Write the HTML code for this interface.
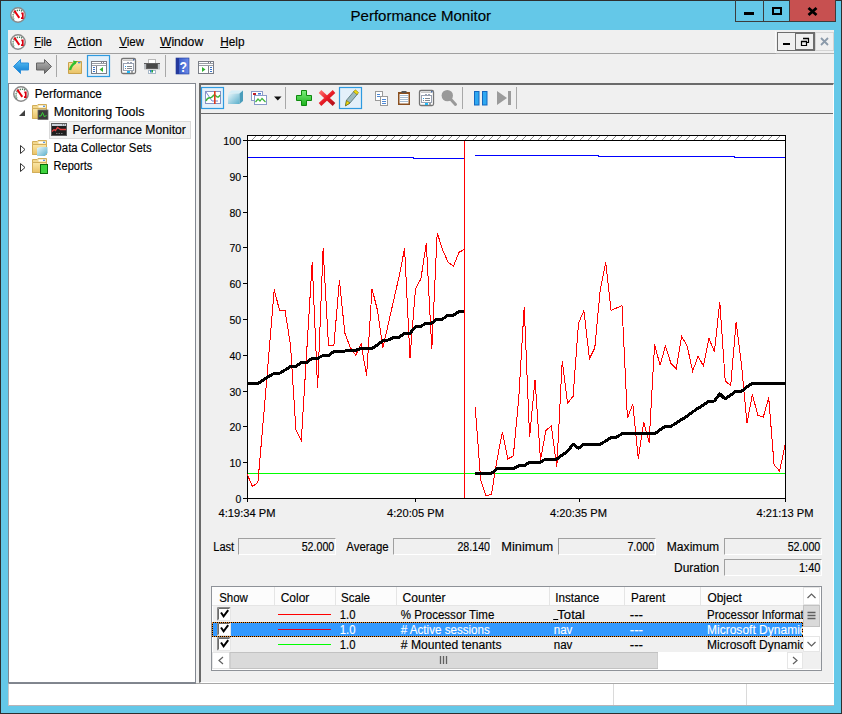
<!DOCTYPE html>
<html><head><meta charset="utf-8">
<style>
*{margin:0;padding:0;box-sizing:border-box}
html,body{width:842px;height:714px;overflow:hidden}
body{position:relative;background:#64C8E8;font-family:"Liberation Sans",sans-serif;font-size:12px;color:#000}
.a{position:absolute}
.t{position:absolute;white-space:pre;line-height:1}
</style></head><body>

<!-- outer dark border -->
<div class="a" style="left:0;top:0;width:842px;height:714px;border:1px solid #2E2E2E"></div>
<svg width="0" height="0" style="position:absolute">
<defs>
<symbol id="perf" viewBox="0 0 16 16">
<circle cx="8" cy="8" r="7.2" fill="#fff" stroke="#8A8A8A" stroke-width="1.5"/>
<path d="M4,12.5A6,6 0 0 1 12.5,4.3" fill="none" stroke="#4A7A5A" stroke-width="1.5" stroke-dasharray="1.2,0.9"/>
<path d="M4.3,3.6L9.3,10.9" stroke="#E8000C" stroke-width="1.9" fill="none"/>
<path d="M11.3,6.3H12.8V11.2H11" stroke="#D80010" stroke-width="1.7" fill="none"/>
</symbol>
</defs></svg>
<svg class="a" style="left:10px;top:7px" width="16" height="16"><use href="#perf"/></svg>

<!-- title -->

<!-- caption buttons -->
<div class="a" style="left:789px;top:0;width:47px;height:22px;background:#C75050"></div>
<div class="a" style="left:735px;top:0;width:101px;height:22px;border:1px solid #3C3C3C;border-top:none"></div>
<div class="a" style="left:763px;top:0;width:1px;height:21px;background:#3C3C3C"></div>
<div class="a" style="left:789px;top:0;width:1px;height:21px;background:#3C3C3C"></div>
<div class="a" style="left:744px;top:12px;width:10px;height:3px;background:#000"></div>
<div class="a" style="left:772px;top:7px;width:10px;height:8px;border:2px solid #000;border-top-width:2px"></div>
<svg class="a" style="left:806px;top:6px" width="13" height="11"><path d="M2.5,2L10.5,9M10.5,2L2.5,9" stroke="#000" stroke-width="2.8"/></svg>

<!-- menu bar -->
<div class="a" style="left:8px;top:30px;width:826px;height:24px;background:#F0F0F0;border-bottom:1px solid #A0A0A0"></div>
<svg class="a" style="left:10px;top:34px" width="16" height="16"><use href="#perf"/></svg>
<!-- MDI buttons -->
<div class="a" style="left:775px;top:31px;width:1px;height:22px;background:#FAFAFA"></div>
<div class="a" style="left:776px;top:31px;width:58px;height:23px;background:#F0F0F0;border-bottom:1px solid #B4B4B4"></div>
<div class="a" style="left:777px;top:32px;width:19px;height:19px;border:1px solid #6E6E6E;background:#F0F0F0"></div>
<div class="a" style="left:795px;top:32px;width:20px;height:19px;border:2px solid #6E6E6E;border-left-width:1px;background:#F0F0F0"></div>
<div class="a" style="left:815px;top:32px;width:19px;height:19px;border:1px solid #D4D4D4;background:#F0F0F0"></div>
<div class="a" style="left:783px;top:43px;width:7px;height:2px;background:#000"></div>
<svg class="a" style="left:799px;top:36px" width="12" height="12"><path d="M4.5,2.5h5v4h-2M2.5,5.5h5v4h-5z" fill="none" stroke="#000" stroke-width="1.2"/><path d="M4,2.5h6M2,5.5h6" stroke="#000" stroke-width="1.5"/></svg>
<svg class="a" style="left:819px;top:36px" width="12" height="12"><path d="M2,2L9,9M9,2L2,9" stroke="#8B9AAA" stroke-width="1.8"/></svg>

<!-- toolbar + client bg -->
<div class="a" style="left:8px;top:54px;width:826px;height:630px;background:#F0F0F0"></div>

<!-- tree panel -->
<div class="a" style="left:8px;top:83px;width:188px;height:600px;background:#fff;border:1px solid #828790"></div>

<!-- right panel -->
<div class="a" style="left:199px;top:83px;width:635px;height:600px;background:#F0F0F0;border-left:2px solid #6A6A6A;border-top:2px solid #6A6A6A;border-right:1px solid #FFFFFF;border-bottom:1px solid #FFFFFF"></div>
<div class="a" style="left:201px;top:113px;width:632px;height:1px;background:#6A6A6A"></div>

<!-- status bar -->
<div class="a" style="left:8px;top:683px;width:826px;height:23px;background:#fff;border-top:1px solid #80848C;border-bottom:1px solid #B9B4B8;border-left:1px solid #C8C8C8"></div>
<div class="a" style="left:196px;top:683px;width:638px;height:1px;background:#A8A8A8"></div>
<div class="a" style="left:613px;top:684px;width:1px;height:21px;background:#DADADA"></div>
<div class="a" style="left:746px;top:684px;width:1px;height:21px;background:#DADADA"></div>

<svg class="a" style="left:0;top:0" width="842" height="714" viewBox="0 0 842 714" shape-rendering="crispEdges">
<rect x="247.5" y="135.5" width="538" height="363" fill="#fff" stroke="#000" stroke-width="1"/>
<line x1="247" y1="140.5" x2="786" y2="140.5" stroke="#000"/>
<path d="M252,140L256,136M260,140L264,136M268,140L272,136M276,140L280,136M284,140L288,136M292,140L296,136M301,140L305,136M309,140L313,136M317,140L321,136M325,140L329,136M333,140L337,136M342,140L346,136M350,140L354,136M358,140L362,136M366,140L370,136M374,140L378,136M383,140L387,136M391,140L395,136M399,140L403,136M407,140L411,136M415,140L419,136M424,140L428,136M432,140L436,136M440,140L444,136M448,140L452,136M456,140L460,136M465,140L469,136M473,140L477,136M481,140L485,136M489,140L493,136M497,140L501,136M506,140L510,136M514,140L518,136M522,140L526,136M530,140L534,136M538,140L542,136M547,140L551,136M555,140L559,136M563,140L567,136M571,140L575,136M580,140L584,136M588,140L592,136M596,140L600,136M604,140L608,136M612,140L616,136M621,140L625,136M629,140L633,136M637,140L641,136M645,140L649,136M653,140L657,136M662,140L666,136M670,140L674,136M678,140L682,136M686,140L690,136M694,140L698,136M703,140L707,136M711,140L715,136M719,140L723,136M727,140L731,136M735,140L739,136M744,140L748,136M752,140L756,136M760,140L764,136M768,140L772,136M776,140L780,136" stroke="#707070" stroke-width="0.8" fill="none" shape-rendering="auto"/>
<line x1="243" y1="140.5" x2="247" y2="140.5" stroke="#000"/>
<line x1="243" y1="176.5" x2="247" y2="176.5" stroke="#000"/>
<line x1="243" y1="212.5" x2="247" y2="212.5" stroke="#000"/>
<line x1="243" y1="247.5" x2="247" y2="247.5" stroke="#000"/>
<line x1="243" y1="283.5" x2="247" y2="283.5" stroke="#000"/>
<line x1="243" y1="319.5" x2="247" y2="319.5" stroke="#000"/>
<line x1="243" y1="355.5" x2="247" y2="355.5" stroke="#000"/>
<line x1="243" y1="391.5" x2="247" y2="391.5" stroke="#000"/>
<line x1="243" y1="426.5" x2="247" y2="426.5" stroke="#000"/>
<line x1="243" y1="462.5" x2="247" y2="462.5" stroke="#000"/>
<line x1="243" y1="498.5" x2="247" y2="498.5" stroke="#000"/>
<line x1="247.5" y1="498" x2="247.5" y2="502" stroke="#000"/>
<line x1="415.5" y1="498" x2="415.5" y2="502" stroke="#000"/>
<line x1="579.5" y1="498" x2="579.5" y2="502" stroke="#000"/>
<line x1="785.5" y1="498" x2="785.5" y2="502" stroke="#000"/>
</svg>
<svg class="a" style="left:0;top:0" width="842" height="714" viewBox="0 0 842 714">
<line x1="248" y1="473.5" x2="785" y2="473.5" stroke="#00FF00" stroke-width="1" shape-rendering="crispEdges"/>
<path d="M248,157.5H413V158.5H464.4 M475.2,155.5H598V156.5H734V157.5H785" stroke="#0000FF" fill="none" stroke-width="1" shape-rendering="crispEdges"/>
<polyline points="247.0,473.7 252.4,486.5 257.9,482.5 263.3,420.0 268.7,356.0 274.2,289.6 279.6,310.6 285.0,310.2 290.5,345.0 295.9,430.0 301.3,440.4 306.8,350.0 312.2,262.0 317.6,388.4 323.1,248.4 328.5,345.5 333.9,345.5 339.4,280.4 344.8,333.0 350.3,347.5 355.7,355.3 361.1,343.5 366.6,375.7 372.0,288.6 377.4,310.0 382.9,347.5 388.3,324.0 393.7,300.0 399.2,276.0 404.6,248.4 410.0,358.2 415.5,288.6 420.9,278.8 426.3,243.5 431.8,349.4 437.2,232.7 442.6,250.0 448.1,262.2 453.5,266.1 458.9,252.4 464.4,249.4" fill="none" stroke="#FF0000" stroke-width="1" shape-rendering="crispEdges"/>
<polyline points="475.2,407.0 480.7,480.0 486.1,496.0 491.5,494.0 497.0,460.0 502.4,431.6 507.8,459.0 513.3,456.0 518.7,399.0 524.2,306.7 529.6,437.0 535.0,379.6 540.5,460.0 545.9,430.6 551.3,425.7 556.8,466.9 562.2,361.0 567.6,403.1 573.1,396.3 578.5,323.3 583.9,310.6 589.4,358.6 594.8,347.8 600.2,290.0 605.7,262.2 611.1,310.4 616.5,308.0 622.0,305.5 627.4,418.0 632.8,404.3 638.3,459.2 643.7,422.0 649.1,442.5 654.6,344.1 660.0,365.3 665.4,346.1 670.9,363.3 676.3,368.6 681.7,336.3 687.2,346.1 692.6,371.2 698.1,356.3 703.5,366.1 708.9,338.2 714.4,351.8 719.8,302.0 725.2,380.8 730.7,385.7 736.1,322.0 741.5,365.0 747.0,423.0 752.4,394.5 757.8,415.1 763.3,417.1 768.7,397.5 774.1,465.0 779.6,471.0 785.0,445.5" fill="none" stroke="#FF0000" stroke-width="1" shape-rendering="crispEdges"/>
<polyline points="247.0,383.4 252.4,383.4 257.9,383.4 263.3,380.0 268.7,376.5 274.2,373.3 279.6,373.3 285.0,370.0 290.5,366.6 295.9,366.6 301.3,362.3 306.8,362.3 312.2,358.3 317.6,358.3 323.1,355.5 328.5,355.5 333.9,351.4 339.4,351.0 344.8,351.0 350.3,350.5 355.7,350.4 361.1,348.4 366.6,348.4 372.0,348.4 377.4,345.0 382.9,340.6 388.3,340.0 393.7,337.3 399.2,337.3 404.6,333.3 410.0,333.3 415.5,326.9 420.9,326.3 426.3,323.0 431.8,323.0 437.2,319.0 442.6,319.0 448.1,315.1 453.5,315.1 458.9,311.8 464.4,312.0" fill="none" stroke="#000" stroke-width="3" stroke-linejoin="round" shape-rendering="crispEdges"/>
<polyline points="475.2,473.3 480.7,473.3 486.1,473.3 491.5,473.3 497.0,468.8 502.4,468.8 507.8,468.8 513.3,468.8 518.7,465.9 524.2,465.9 529.6,462.0 535.0,462.0 540.5,462.0 545.9,459.0 551.3,459.0 556.8,459.0 562.2,455.1 567.6,451.2 573.1,444.3 578.5,448.2 583.9,444.3 589.4,444.3 594.8,444.3 600.2,444.1 605.7,441.0 611.1,437.3 616.5,437.3 622.0,433.7 627.4,433.7 632.8,433.7 638.3,433.7 643.7,433.7 649.1,433.7 654.6,433.7 660.0,430.0 665.4,426.3 670.9,426.3 676.3,423.0 681.7,419.5 687.2,416.1 692.6,412.0 698.1,408.2 703.5,405.0 708.9,401.0 714.4,401.0 719.8,393.9 725.2,399.0 730.7,395.0 736.1,391.2 741.5,391.2 747.0,387.0 752.4,383.3 757.8,383.3 763.3,383.3 768.7,383.3 774.1,383.3 779.6,383.3 785.0,383.3" fill="none" stroke="#000" stroke-width="3" stroke-linejoin="round" shape-rendering="crispEdges"/>
<line x1="464.5" y1="141" x2="464.5" y2="498" stroke="#FF0000" stroke-width="1" shape-rendering="crispEdges"/>
</svg>
<!-- main toolbar icons -->
<svg class="a" style="left:0;top:0" width="842" height="120" viewBox="0 0 842 120">
<defs>
<linearGradient id="gb" x1="0" y1="0" x2="0" y2="1"><stop offset="0" stop-color="#5EC4F6"/><stop offset="1" stop-color="#0A78D0"/></linearGradient>
<linearGradient id="gg" x1="0" y1="0" x2="0" y2="1"><stop offset="0" stop-color="#B8B8B8"/><stop offset="1" stop-color="#6E6E6E"/></linearGradient>
<linearGradient id="gf" x1="0" y1="0" x2="0" y2="1"><stop offset="0" stop-color="#FBE7A6"/><stop offset="1" stop-color="#E9C266"/></linearGradient>
<linearGradient id="gp" x1="0" y1="0" x2="0" y2="1"><stop offset="0" stop-color="#7CF07C"/><stop offset="1" stop-color="#1CB01C"/></linearGradient>
<linearGradient id="gc" x1="0" y1="0" x2="1" y2="1"><stop offset="0" stop-color="#E8F6FB"/><stop offset="1" stop-color="#5AAFCB"/></linearGradient>
</defs>
<!-- back -->
<path d="M13.5,66.5L20.5,59.5V63H28.5V70H20.5V73.5Z" fill="url(#gb)" stroke="#2C8FDB" stroke-width="1" stroke-linejoin="round"/>
<!-- forward -->
<path d="M51.5,66.5L44.5,59.5V63H36.5V70H44.5V73.5Z" fill="url(#gg)" stroke="#646464" stroke-width="1" stroke-linejoin="round"/>
<rect x="56" y="55" width="1" height="22" fill="#A8A8A8"/>
<!-- up folder -->
<path d="M68.5,62.5H72.5L73.5,61.5H81.5V73.5H68.5Z" fill="url(#gf)" stroke="#C9A24C" stroke-width="1"/>
<path d="M70,70C71,66 73,64 75.5,62.5" stroke="#2FBF2F" stroke-width="2.4" fill="none"/>
<path d="M73,60.5L77.5,61.5L74.5,64.5Z" fill="#2FBF2F"/>
<rect x="78" y="62" width="2.5" height="1.3" fill="#3C8FE0"/>
<!-- selected button -->
<rect x="87.5" y="55.5" width="22" height="21" fill="#E3F0FA" stroke="#2E9AE0" stroke-width="1.2"/>
<rect x="91.5" y="61.5" width="15" height="12" fill="#fff" stroke="#7B7F88" stroke-width="1"/>
<rect x="92" y="63" width="14" height="1" fill="#9A9EA6"/><rect x="92" y="65" width="14" height="1" fill="#9A9EA6"/><rect x="101" y="62" width="1" height="1" fill="#7B7F88"/><rect x="103" y="62" width="1" height="1" fill="#7B7F88"/>
<rect x="96" y="66" width="1" height="7.5" fill="#7B7F88"/>
<path d="M93,67.5h2M93,69.5h2M93,71.5h2" stroke="#3B74C8" stroke-width="1"/>
<path d="M99.5,69.5L103,67V72Z" fill="#31B131"/>
<!-- properties --><g id="props">
<rect x="121.5" y="58.5" width="14" height="15" rx="1.5" fill="#fff" stroke="#747474" stroke-width="1.3"/>
<rect x="123" y="60" width="11" height="1" fill="#C8C8C8"/>
<rect x="133" y="59" width="1.5" height="1.5" fill="#4A6EA8"/>
<rect x="123.5" y="63.5" width="10" height="7" fill="#fff" stroke="#9AA2B2" stroke-width="1"/>
<rect x="127" y="62" width="2" height="1.5" fill="#9AA2B2"/><rect x="130" y="62" width="2" height="1.5" fill="#9AA2B2"/>
<rect x="125" y="66" width="1" height="1" fill="#1EA0F0"/>
<rect x="127" y="66" width="5" height="1" fill="#808890"/>
<rect x="125" y="68" width="1" height="1" fill="#808890"/>
<rect x="127" y="68" width="5" height="1" fill="#808890"/>
<rect x="127" y="71" width="3" height="2" fill="#1EB8F8"/>
<rect x="131" y="71" width="2" height="2" fill="#A0A0A0"/>
</g>
<!-- printer -->
<rect x="148.5" y="59.5" width="7" height="4" fill="#fff" stroke="#B8B8B8" stroke-width="1"/>
<rect x="144" y="63" width="16" height="7" fill="#5E5E5E"/>
<rect x="147" y="64" width="10" height="4" fill="#484848"/>
<rect x="144" y="64" width="2" height="5" fill="#B8BCC0"/>
<rect x="158" y="64" width="2" height="5" fill="#B8BCC0"/>
<rect x="144" y="69" width="16" height="1" fill="#D8D8D8"/>
<rect x="148.5" y="70.5" width="7" height="3" fill="#fff" stroke="#A8B8C8" stroke-width="1"/>
<rect x="150" y="70" width="1.5" height="2.5" fill="#2A80D0"/><rect x="151.5" y="70" width="1.5" height="2.5" fill="#20A040"/>
<rect x="165" y="55" width="1" height="22" fill="#A8A8A8"/>
<!-- help -->
<linearGradient id="gh" x1="0" y1="0" x2="1" y2="0"><stop offset="0" stop-color="#2F50C0"/><stop offset="1" stop-color="#6A8BE8"/></linearGradient><rect x="176" y="58" width="13" height="16" fill="url(#gh)" stroke="#1E3A9A" stroke-width="0.6"/>
<rect x="176" y="58" width="3" height="16" fill="#24399C"/>
<text x="179.6" y="72.3" font-family="Liberation Sans" font-size="14" font-weight="bold" fill="#fff" textLength="7.5" lengthAdjust="spacingAndGlyphs">?</text>
<!-- last window icon -->
<rect x="198.5" y="61.5" width="15" height="12" fill="#fff" stroke="#7B7F88" stroke-width="1"/>
<rect x="199" y="63" width="14" height="1" fill="#9A9EA6"/><rect x="199" y="65" width="14" height="1" fill="#9A9EA6"/><rect x="208" y="62" width="1" height="1" fill="#7B7F88"/><rect x="210" y="62" width="1" height="1" fill="#7B7F88"/>
<rect x="208" y="66" width="1" height="7.5" fill="#7B7F88"/>
<path d="M210,67.5h2M210,69.5h2M210,71.5h2" stroke="#3B74C8" stroke-width="1"/>
<path d="M202,67L205.5,69.5L202,72Z" fill="#31B131"/>

<!-- right toolbar -->
<rect x="201.5" y="87.5" width="22" height="21" fill="#E3F0FA" stroke="#2E9AE0" stroke-width="1.2"/>
<rect x="205.5" y="91.5" width="15" height="12" fill="#fff" stroke="#8592C4" stroke-width="1"/>
<path d="M206,92L212,101H218" stroke="#7785D0" stroke-width="1" fill="none"/>
<path d="M206,101C208,96 210,99 212,97S214,94 216,96S219,97 220,95" stroke="#3BB43B" stroke-width="1.5" fill="none"/>
<rect x="214" y="91" width="1.6" height="13" fill="#E03A1A"/>
<!-- cube -->
<path d="M228,93.5L231.5,90.5H243L239.5,93.5Z" fill="#D6EEF7"/>
<path d="M228,93.5H239.5V104H228Z" fill="url(#gc)"/>
<path d="M239.5,93.5L243,90.5V101L239.5,104Z" fill="#4B9DBB"/>
<!-- report -->
<rect x="251.5" y="91.5" width="11" height="9" fill="#fff" stroke="#8A9BC8" stroke-width="1"/>
<rect x="253" y="93" width="3" height="2" fill="#C0202A"/>
<rect x="258" y="93" width="3" height="1.5" fill="#3A70D8"/>
<rect x="254.5" y="95.5" width="12" height="9" fill="#fff" stroke="#8A9BC8" stroke-width="1"/>
<path d="M255.5,102L258,99L260,101L262,98.5L265.5,102" stroke="#3BB43B" stroke-width="1.2" fill="none"/>
<path d="M274,96.5H281.5L277.75,100.5Z" fill="#111"/>
<rect x="285" y="87" width="1" height="22" fill="#A8A8A8"/>
<!-- plus -->
<path d="M301.5,90.5H306.5V95.5H311.5V100.5H306.5V105.5H301.5V100.5H296.5V95.5H301.5Z" fill="url(#gp)" stroke="#0E8A0E" stroke-width="1"/>
<!-- X -->
<linearGradient id="gx" x1="0" y1="0" x2="1" y2="1"><stop offset="0" stop-color="#FF6A6A"/><stop offset="0.5" stop-color="#E81A24"/><stop offset="1" stop-color="#B0101A"/></linearGradient>
<path d="M320,91.5L334,104.5M334,91.5L320,104.5" stroke="url(#gx)" stroke-width="3.8" stroke-linecap="butt"/>
<!-- selected pencil -->
<rect x="339.5" y="87.5" width="22" height="21" fill="#E3F0FA" stroke="#2E9AE0" stroke-width="1.2"/>
<path d="M345.5,105.8L346.5,100.2L354.2,91L357.6,94L349.8,103.2Z" fill="#9DB9BD" stroke="#4E6E74" stroke-width="0.8"/>
<path d="M345.5,105.8L346.5,100.5L350,103Z" fill="#F0DC10" stroke="#6A6000" stroke-width="0.6"/>
<path d="M353.6,91.8L355.4,89.8L358.6,92.6L357,94.6Z" fill="#F0DC10" stroke="#8A7A00" stroke-width="0.6"/>
<!-- copy -->
<rect x="375.5" y="91.5" width="7" height="9" fill="#fff" stroke="#9A9A9A" stroke-width="1"/>
<rect x="380.5" y="96.5" width="7" height="9" fill="#fff" stroke="#9A9A9A" stroke-width="1"/>
<path d="M382,99.5h4M382,101.5h4M382,103.5h4" stroke="#3A7AD0" stroke-width="0.9"/>
<path d="M377,94.5h3M377,96.5h3" stroke="#3A7AD0" stroke-width="0.9"/>
<!-- clipboard -->
<rect x="398" y="92" width="12" height="13" fill="#8A4F1F"/>
<rect x="399.5" y="94" width="9" height="9.5" fill="#fff"/>
<path d="M400,95.5h8M400,97.5h8M400,99.5h8M400,101.5h8" stroke="#9DB5CD" stroke-width="0.9"/>
<rect x="401.5" y="91" width="5" height="2" fill="#555"/>
<!-- properties2 -->
<use href="#props" x="298" y="32"/>
<!-- magnifier -->
<circle cx="447.3" cy="95.6" r="5.7" fill="#999"/>
<path d="M450.5,99L455.5,104.5" stroke="#999" stroke-width="3" stroke-linecap="round"/>
<rect x="462" y="87" width="1" height="22" fill="#A8A8A8"/>
<!-- pause -->
<rect x="474.5" y="91.5" width="4.5" height="13.5" fill="#2FA8F0" stroke="#1468C0" stroke-width="1"/>
<rect x="482.5" y="91.5" width="4.5" height="13.5" fill="#2FA8F0" stroke="#1468C0" stroke-width="1"/>
<!-- next -->
<path d="M497,91V105L507,98Z" fill="#9B9B9B"/>
<rect x="508" y="91" width="3" height="14" fill="#9B9B9B"/>
<rect x="516" y="87" width="1" height="22" fill="#A8A8A8"/>
</svg>

<!-- tree -->
<svg class="a" style="left:13px;top:86px" width="16" height="16"><use href="#perf"/></svg>
<svg class="a" style="left:0;top:100px" width="196" height="80" viewBox="0 100 196 80">
<path d="M19,116H25V110Z" fill="#404040"/>
<path d="M32.5,105.5H37L38,104.5H46.5V118.5H32.5Z" fill="#F2D88E" stroke="#D2AE5A" stroke-width="1"/>
<rect x="38.5" y="105.5" width="7" height="2" fill="#fff"/><rect x="43" y="105.7" width="2" height="1.2" fill="#4A90E2"/>
<path d="M32.5,108.5H46.5V118.5H32.5Z" fill="url(#gf)" stroke="#D2AE5A" stroke-width="1"/>
<rect x="38" y="110" width="10" height="9.5" fill="#3A3A3A" stroke="#6A6A6A" stroke-width="0.8"/>
<path d="M39,116L41,116L42.5,112.5L44.5,117L46.5,115" stroke="#38D038" stroke-width="1" fill="none"/>
<rect x="49.5" y="121.5" width="141" height="17" fill="#F2F2F2" stroke="#DADADA" stroke-width="1"/>
<rect x="51.5" y="123.5" width="15" height="12" fill="#1E1E1E" stroke="#5A5A5A" stroke-width="1"/>
<rect x="52" y="124" width="14" height="2" fill="#C8D0D8"/>
<path d="M62,124.8h1M64,124.8h1" stroke="#555" stroke-width="0.8"/>
<path d="M52,131.5L54,129.5L55.5,130.5L57.5,127.5L59,128.5L60.5,129.5H66" stroke="#E04040" stroke-width="1.3" fill="none"/>
<path d="M56,133.5h1.5M58.5,133.5h1.5M61,133.5h1.5" stroke="#8A8A8A" stroke-width="0.8"/>
<path d="M20.5,145.5V153.5L25,149.5Z" fill="#fff" stroke="#333" stroke-width="1"/>
<path d="M32.5,141.5H37L38,140.5H46.5V154.5H32.5Z" fill="#F2D88E" stroke="#D2AE5A" stroke-width="1"/>
<rect x="38.5" y="141.5" width="7" height="2" fill="#fff"/><rect x="43" y="141.7" width="2" height="1.2" fill="#4A90E2"/>
<path d="M32.5,144.5H46.5V154.5H32.5Z" fill="url(#gf)" stroke="#D2AE5A" stroke-width="1"/>
<path d="M37,148L40,147H47.5V153L45,156H37Z" fill="url(#gc)"/>
<path d="M20.5,163.5V171.5L25,167.5Z" fill="#fff" stroke="#333" stroke-width="1"/>
<path d="M32.5,159.5H37L38,158.5H46.5V172.5H32.5Z" fill="#F2D88E" stroke="#D2AE5A" stroke-width="1"/>
<rect x="38.5" y="159.5" width="7" height="2" fill="#fff"/><rect x="43" y="159.7" width="2" height="1.2" fill="#4A90E2"/>
<path d="M32.5,162.5H46.5V172.5H32.5Z" fill="url(#gf)" stroke="#D2AE5A" stroke-width="1"/>
<rect x="40.5" y="164.5" width="7" height="9" fill="#3ED33E" stroke="#0A6A0A" stroke-width="1"/>
</svg>

<!-- stats boxes -->
<div class="a" style="left:238px;top:538px;width:98px;height:17px;border-top:1px solid #A0A0A0;border-left:1px solid #A0A0A0;border-right:1px solid #fff;border-bottom:1px solid #fff"></div>
<div class="a" style="left:393px;top:538px;width:98px;height:17px;border-top:1px solid #A0A0A0;border-left:1px solid #A0A0A0;border-right:1px solid #fff;border-bottom:1px solid #fff"></div>
<div class="a" style="left:558px;top:538px;width:98px;height:17px;border-top:1px solid #A0A0A0;border-left:1px solid #A0A0A0;border-right:1px solid #fff;border-bottom:1px solid #fff"></div>
<div class="a" style="left:724px;top:538px;width:98px;height:17px;border-top:1px solid #A0A0A0;border-left:1px solid #A0A0A0;border-right:1px solid #fff;border-bottom:1px solid #fff"></div>
<div class="a" style="left:724px;top:559px;width:98px;height:17px;border-top:1px solid #A0A0A0;border-left:1px solid #A0A0A0;border-right:1px solid #fff;border-bottom:1px solid #fff"></div>

<!-- table -->
<div class="a" style="left:211px;top:586px;width:611px;height:85px;border:1px solid #8E9298;background:#F0F0F0;box-shadow:inset 0 0 0 1px #fff"></div>
<div class="a" style="left:212px;top:587px;width:591px;height:19px;background:#FCFCFC;border-bottom:1px solid #E5E5E5"></div>
<div class="a" style="left:274px;top:587px;width:1px;height:19px;background:#E5E5E5"></div>
<div class="a" style="left:335px;top:587px;width:1px;height:19px;background:#E5E5E5"></div>
<div class="a" style="left:396px;top:587px;width:1px;height:19px;background:#E5E5E5"></div>
<div class="a" style="left:549px;top:587px;width:1px;height:19px;background:#E5E5E5"></div>
<div class="a" style="left:624px;top:587px;width:1px;height:19px;background:#E5E5E5"></div>
<div class="a" style="left:700px;top:587px;width:1px;height:19px;background:#E5E5E5"></div>
<!-- selected row -->
<div class="a" style="left:212px;top:622px;width:591px;height:15px;background:#3399FF"></div>

<svg class="a" style="left:0;top:580px" width="842" height="100" viewBox="0 580 842 100">
<g id="cb1">
<rect x="217" y="607" width="14" height="14" fill="#fff"/>
<path d="M217.5,620.5V607.5H230.5" fill="none" stroke="#8A8A8A"/>
<path d="M218.5,619.5V608.5H229.5" fill="none" stroke="#6A6A6A"/>
<path d="M217.5,620.5H230.5V607.5" fill="none" stroke="#E6E6E6"/>
<path d="M221,612.5L223.6,616.3L228.2,610.2" fill="none" stroke="#000" stroke-width="2.0"/>
</g>
<use href="#cb1" y="15"/>
<use href="#cb1" y="30"/>
<rect x="278" y="614" width="53" height="1" fill="#FF0000"/>
<rect x="278" y="629" width="53" height="1" fill="#DD0020"/>
<rect x="278" y="644" width="53" height="1" fill="#00FF00"/>
<!-- h scrollbar -->
<rect x="212" y="652" width="591" height="17" fill="#F0F0F0"/>
<rect x="212.5" y="652.5" width="17" height="16" fill="#fff" stroke="#E6E6E6"/>
<path d="M223,657L219,660.5L223,664" fill="none" stroke="#606060" stroke-width="1.2"/>
<rect x="230" y="652.5" width="428" height="16" fill="#DADADA" stroke="#C2C2C2"/>
<path d="M440.5,656v8M443.5,656v8M446.5,656v8" stroke="#606060" stroke-width="1.3"/>
<rect x="658" y="652" width="129" height="17" fill="#fff"/>
<rect x="787.5" y="652.5" width="15" height="16" fill="#fff" stroke="#E6E6E6"/>
<path d="M793,657L797,660.5L793,664" fill="none" stroke="#606060" stroke-width="1.2"/>
<!-- v scrollbar -->
<rect x="803" y="587" width="18" height="65" fill="#fff"/>
<rect x="803.5" y="587.5" width="16" height="17" fill="#fff" stroke="#E6E6E6"/>
<path d="M807.5,598L811.5,594L815.5,598" fill="none" stroke="#606060" stroke-width="1.2"/>
<rect x="803.5" y="605.5" width="16" height="21" fill="#DADADA" stroke="#C2C2C2"/>
<path d="M807.5,612.5h8M807.5,615.5h8M807.5,618.5h8" stroke="#606060" stroke-width="1.3"/>
<rect x="803.5" y="636.5" width="16" height="15" fill="#fff" stroke="#E6E6E6"/>
<path d="M807.5,642L811.5,646L815.5,642" fill="none" stroke="#606060" stroke-width="1.2"/>
<rect x="803" y="652" width="18" height="17" fill="#F0F0F0"/>
</svg>
<svg class="a" style="left:0;top:0" width="842" height="714" viewBox="0 0 842 714" shape-rendering="crispEdges"><rect x="212.5" y="622.5" width="590" height="14" fill="none" stroke="#F08C28"/><rect x="212.5" y="622.5" width="590" height="14" fill="none" stroke="#000" stroke-dasharray="1,1"/></svg>

<svg class="a" style="left:0;top:0" width="842" height="714" viewBox="0 0 842 714" font-family="Liberation Sans">
<defs><clipPath id="tclip"><rect x="212" y="587" width="591" height="65"/></clipPath></defs>
<text x="350.5" y="20.5" font-size="15" fill="#000" stroke="#000" stroke-width="0.15" textLength="140.6" lengthAdjust="spacingAndGlyphs">Performance Monitor</text>
<text x="34.3" y="46.0" font-size="12" fill="#000" stroke="#000" stroke-width="0.15" textLength="17.6" lengthAdjust="spacingAndGlyphs">File</text>
<rect x="34.3" y="47" width="7" height="1" fill="#000"/>
<text x="67.8" y="46.0" font-size="12" fill="#000" stroke="#000" stroke-width="0.15" textLength="34.4" lengthAdjust="spacingAndGlyphs">Action</text>
<rect x="67.8" y="47" width="8" height="1" fill="#000"/>
<text x="119.2" y="46.0" font-size="12" fill="#000" stroke="#000" stroke-width="0.15" textLength="24.9" lengthAdjust="spacingAndGlyphs">View</text>
<rect x="119.2" y="47" width="8" height="1" fill="#000"/>
<text x="159.9" y="46.0" font-size="12" fill="#000" stroke="#000" stroke-width="0.15" textLength="43.3" lengthAdjust="spacingAndGlyphs">Window</text>
<rect x="159.9" y="47" width="11" height="1" fill="#000"/>
<text x="220.2" y="46.0" font-size="12" fill="#000" stroke="#000" stroke-width="0.15" textLength="24.3" lengthAdjust="spacingAndGlyphs">Help</text>
<rect x="220.2" y="47" width="8" height="1" fill="#000"/>
<text x="34.7" y="97.7" font-size="12" fill="#000" stroke="#000" stroke-width="0.15" textLength="67.1" lengthAdjust="spacingAndGlyphs">Performance</text>
<text x="53.7" y="116.0" font-size="12" fill="#000" stroke="#000" stroke-width="0.15" textLength="90.9" lengthAdjust="spacingAndGlyphs">Monitoring Tools</text>
<text x="72.5" y="134.0" font-size="12" fill="#000" stroke="#000" stroke-width="0.15" textLength="113.3" lengthAdjust="spacingAndGlyphs">Performance Monitor</text>
<text x="53.6" y="151.7" font-size="12" fill="#000" stroke="#000" stroke-width="0.15" textLength="98.0" lengthAdjust="spacingAndGlyphs">Data Collector Sets</text>
<text x="53.6" y="169.6" font-size="12" fill="#000" stroke="#000" stroke-width="0.15" textLength="38.7" lengthAdjust="spacingAndGlyphs">Reports</text>
<text x="223.3" y="144.5" font-size="11.5" fill="#000" stroke="#000" stroke-width="0.15" textLength="17.9" lengthAdjust="spacingAndGlyphs">100</text>
<text x="229.5" y="180.5" font-size="11.5" fill="#000" stroke="#000" stroke-width="0.15" textLength="11.7" lengthAdjust="spacingAndGlyphs">90</text>
<text x="229.5" y="216.5" font-size="11.5" fill="#000" stroke="#000" stroke-width="0.15" textLength="11.7" lengthAdjust="spacingAndGlyphs">80</text>
<text x="229.5" y="251.5" font-size="11.5" fill="#000" stroke="#000" stroke-width="0.15" textLength="11.7" lengthAdjust="spacingAndGlyphs">70</text>
<text x="229.5" y="287.5" font-size="11.5" fill="#000" stroke="#000" stroke-width="0.15" textLength="11.7" lengthAdjust="spacingAndGlyphs">60</text>
<text x="229.5" y="323.5" font-size="11.5" fill="#000" stroke="#000" stroke-width="0.15" textLength="11.7" lengthAdjust="spacingAndGlyphs">50</text>
<text x="229.5" y="359.5" font-size="11.5" fill="#000" stroke="#000" stroke-width="0.15" textLength="11.7" lengthAdjust="spacingAndGlyphs">40</text>
<text x="229.5" y="395.5" font-size="11.5" fill="#000" stroke="#000" stroke-width="0.15" textLength="11.7" lengthAdjust="spacingAndGlyphs">30</text>
<text x="229.5" y="430.5" font-size="11.5" fill="#000" stroke="#000" stroke-width="0.15" textLength="11.7" lengthAdjust="spacingAndGlyphs">20</text>
<text x="229.5" y="466.5" font-size="11.5" fill="#000" stroke="#000" stroke-width="0.15" textLength="11.7" lengthAdjust="spacingAndGlyphs">10</text>
<text x="235.4" y="502.5" font-size="11.5" fill="#000" stroke="#000" stroke-width="0.15" textLength="5.8" lengthAdjust="spacingAndGlyphs">0</text>
<text x="218.6" y="517.0" font-size="11.5" fill="#000" stroke="#000" stroke-width="0.15" textLength="56.8" lengthAdjust="spacingAndGlyphs">4:19:34 PM</text>
<text x="387.1" y="517.0" font-size="11.5" fill="#000" stroke="#000" stroke-width="0.15" textLength="56.8" lengthAdjust="spacingAndGlyphs">4:20:05 PM</text>
<text x="550.1" y="517.0" font-size="11.5" fill="#000" stroke="#000" stroke-width="0.15" textLength="56.8" lengthAdjust="spacingAndGlyphs">4:20:35 PM</text>
<text x="756.6" y="517.0" font-size="11.5" fill="#000" stroke="#000" stroke-width="0.15" textLength="56.8" lengthAdjust="spacingAndGlyphs">4:21:13 PM</text>
<text x="213.3" y="551.0" font-size="12" fill="#000" stroke="#000" stroke-width="0.15" textLength="20.9" lengthAdjust="spacingAndGlyphs">Last</text>
<text x="346.3" y="551.0" font-size="12" fill="#000" stroke="#000" stroke-width="0.15" textLength="42.3" lengthAdjust="spacingAndGlyphs">Average</text>
<text x="501.3" y="551.0" font-size="12" fill="#000" stroke="#000" stroke-width="0.15" textLength="51.9" lengthAdjust="spacingAndGlyphs">Minimum</text>
<text x="666.8" y="551.0" font-size="12" fill="#000" stroke="#000" stroke-width="0.15" textLength="52.4" lengthAdjust="spacingAndGlyphs">Maximum</text>
<text x="674.1" y="572.0" font-size="12" fill="#000" stroke="#000" stroke-width="0.15" textLength="45.1" lengthAdjust="spacingAndGlyphs">Duration</text>
<text x="301.7" y="551.0" font-size="12" fill="#000" stroke="#000" stroke-width="0.15" textLength="32.6" lengthAdjust="spacingAndGlyphs">52.000</text>
<text x="457.4" y="551.0" font-size="12" fill="#000" stroke="#000" stroke-width="0.15" textLength="32.6" lengthAdjust="spacingAndGlyphs">28.140</text>
<text x="627.4" y="551.0" font-size="12" fill="#000" stroke="#000" stroke-width="0.15" textLength="26.9" lengthAdjust="spacingAndGlyphs">7.000</text>
<text x="787.7" y="551.0" font-size="12" fill="#000" stroke="#000" stroke-width="0.15" textLength="32.6" lengthAdjust="spacingAndGlyphs">52.000</text>
<text x="799.0" y="572.0" font-size="12" fill="#000" stroke="#000" stroke-width="0.15" textLength="21.3" lengthAdjust="spacingAndGlyphs">1:40</text>
<text x="219.2" y="602.0" font-size="12" fill="#000" stroke="#000" stroke-width="0.15" textLength="28.7" lengthAdjust="spacingAndGlyphs">Show</text>
<text x="280.7" y="602.0" font-size="12" fill="#000" stroke="#000" stroke-width="0.15" textLength="28.6" lengthAdjust="spacingAndGlyphs">Color</text>
<text x="340.9" y="602.0" font-size="12" fill="#000" stroke="#000" stroke-width="0.15" textLength="29.1" lengthAdjust="spacingAndGlyphs">Scale</text>
<text x="402.5" y="602.0" font-size="12" fill="#000" stroke="#000" stroke-width="0.15" textLength="43.0" lengthAdjust="spacingAndGlyphs">Counter</text>
<text x="555.2" y="602.0" font-size="12" fill="#000" stroke="#000" stroke-width="0.15" textLength="44.0" lengthAdjust="spacingAndGlyphs">Instance</text>
<text x="630.9" y="602.0" font-size="12" fill="#000" stroke="#000" stroke-width="0.15" textLength="34.4" lengthAdjust="spacingAndGlyphs">Parent</text>
<text x="707.4" y="602.0" font-size="12" fill="#000" stroke="#000" stroke-width="0.15" textLength="34.4" lengthAdjust="spacingAndGlyphs">Object</text>
<g clip-path="url(#tclip)">
<text x="339.8" y="618.6" font-size="12" fill="#000" stroke="#000" stroke-width="0.15" textLength="15.7" lengthAdjust="spacingAndGlyphs">1.0</text>
<text x="400.8" y="618.6" font-size="12" fill="#000" stroke="#000" stroke-width="0.15" textLength="93.5" lengthAdjust="spacingAndGlyphs">% Processor Time</text>
<text x="557.3" y="618.6" font-size="12" fill="#000" stroke="#000" stroke-width="0.15" textLength="27.7" lengthAdjust="spacingAndGlyphs">Total</text>
<rect x="553.2" y="619.0" width="5" height="1" fill="#000"/>
<text x="629.7" y="618.6" font-size="12" fill="#000" stroke="#000" stroke-width="0.15" textLength="13.4" lengthAdjust="spacingAndGlyphs">---</text>
<text x="707.0" y="618.6" font-size="12" fill="#000" stroke="#000" stroke-width="0.15" textLength="112.0" lengthAdjust="spacingAndGlyphs">Processor Information</text>
<text x="339.8" y="633.6" font-size="12" fill="#fff" stroke="#fff" stroke-width="0.15" textLength="15.7" lengthAdjust="spacingAndGlyphs">1.0</text>
<text x="400.8" y="633.6" font-size="12" fill="#fff" stroke="#fff" stroke-width="0.15" textLength="89.0" lengthAdjust="spacingAndGlyphs"># Active sessions</text>
<text x="553.7" y="633.6" font-size="12" fill="#fff" stroke="#fff" stroke-width="0.15" textLength="18.7" lengthAdjust="spacingAndGlyphs">nav</text>
<text x="629.7" y="633.6" font-size="12" fill="#fff" stroke="#fff" stroke-width="0.15" textLength="13.4" lengthAdjust="spacingAndGlyphs">---</text>
<text x="707.0" y="633.6" font-size="12" fill="#fff" stroke="#fff" stroke-width="0.15" textLength="132.0" lengthAdjust="spacingAndGlyphs">Microsoft Dynamics NAV</text>
<text x="339.8" y="648.6" font-size="12" fill="#000" stroke="#000" stroke-width="0.15" textLength="15.7" lengthAdjust="spacingAndGlyphs">1.0</text>
<text x="400.8" y="648.6" font-size="12" fill="#000" stroke="#000" stroke-width="0.15" textLength="100.7" lengthAdjust="spacingAndGlyphs"># Mounted tenants</text>
<text x="553.7" y="648.6" font-size="12" fill="#000" stroke="#000" stroke-width="0.15" textLength="18.7" lengthAdjust="spacingAndGlyphs">nav</text>
<text x="629.7" y="648.6" font-size="12" fill="#000" stroke="#000" stroke-width="0.15" textLength="13.4" lengthAdjust="spacingAndGlyphs">---</text>
<text x="707.0" y="648.6" font-size="12" fill="#000" stroke="#000" stroke-width="0.15" textLength="132.0" lengthAdjust="spacingAndGlyphs">Microsoft Dynamics NAV</text>
</g>
</svg>
</body></html>
